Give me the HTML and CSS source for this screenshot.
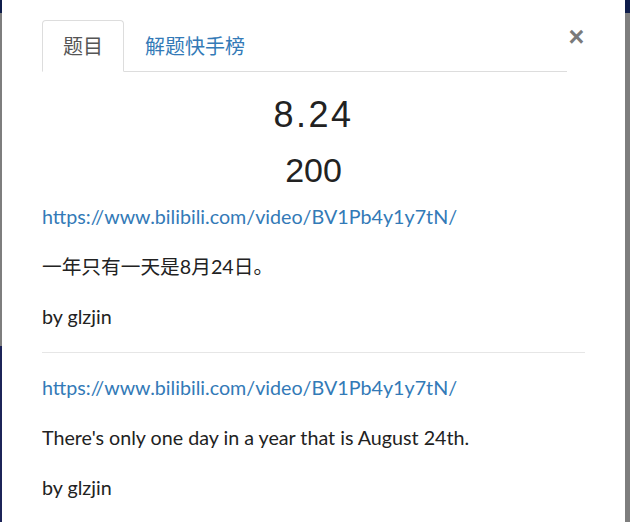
FILE: index.html
```html
<!DOCTYPE html>
<html lang="zh">
<head>
<meta charset="utf-8">
<title>题目</title>
<link rel="stylesheet" href="styles.css">
</head>
<body>
<div class="modal">
  <div class="modal-header">
    <ul class="nav-tabs">
      <li class="tab active">题目</li>
      <li class="tab"><a href="#">解题快手榜</a></li>
    </ul>
    <button class="close" type="button">&times;</button>
  </div>
  <div class="modal-body">
    <h3 class="chal-name">8.24</h3>
    <h4 class="chal-value">200</h4>
    <div class="desc">
      <p><a href="#">https://www.bilibili.com/video/BV1Pb4y1y7tN/</a></p>
      <p>一年只有一天是8月24日。</p>
      <p>by glzjin</p>
      <hr>
      <p><a href="#">https://www.bilibili.com/video/BV1Pb4y1y7tN/</a></p>
      <p>There's only one day in a year that is August 24th.</p>
      <p>by glzjin</p>
    </div>
  </div>
</div>
</body>
</html>
```
FILE: styles.css
```css
html, body {
  margin: 0;
  padding: 0;
  height: 100%;
  overflow: hidden;
}
body {
  background:
    linear-gradient(to bottom, #0f1d4b 0, #0f1d4b 13px, transparent 13px),
    linear-gradient(to bottom, transparent 346px, #1c2458 346px) left top / 2px 100% no-repeat,
    #7e7e7e;
  font-family: Lato, "Noto Sans CJK SC", sans-serif;
  color: #222;
}
.modal {
  box-sizing: border-box;
  margin-left: 2px;
  width: 623px;
  height: 522px;
  background: #fff;
  padding: 20px 40px 0 40px;
}
.modal-header {
  display: flex;
  align-items: flex-start;
}
.nav-tabs {
  flex: 1;
  display: flex;
  list-style: none;
  margin: 0;
  padding: 0;
  border-bottom: 1px solid #ddd;
}
.tab {
  font-family: "Noto Sans CJK SC", sans-serif;
  font-size: 20px;
  line-height: 30px;
  padding: 10px 20px;
  margin-bottom: -1px;
  border: 1px solid transparent;
  border-radius: 4px 4px 0 0;
}
.tab.active {
  color: #555;
  background: #fff;
  border-color: #ddd #ddd transparent;
}
.tab a {
  color: #337ab7;
  text-decoration: none;
}
.close {
  margin: 7px 0 0 1px;
  padding: 0;
  width: 17px;
  background: none;
  border: 0;
  font-family: "Liberation Sans", sans-serif;
  font-size: 27px;
  font-weight: bold;
  line-height: 20px;
  color: #7a7a7a;
}
.modal-body {
  padding: 0;
}
.chal-name {
  margin: 23px 0 0;
  text-align: center;
  font-family: "Liberation Sans", sans-serif;
  font-weight: normal;
  font-size: 36px;
  line-height: 40px;
  letter-spacing: 2.5px;
  color: #222;
}
.chal-value {
  margin: 17px 0 0;
  text-align: center;
  font-family: "Liberation Sans", sans-serif;
  font-weight: normal;
  font-size: 34px;
  line-height: 37px;
  color: #222;
}
.desc {
  margin-top: 14px;
  font-size: 19.7px;
  line-height: 28px;
}
.desc p {
  margin: 0 0 22px;
}
.desc a {
  color: #337ab7;
  text-decoration: none;
}
.desc hr {
  border: 0;
  border-top: 1px solid #e6e6e6;
  margin: -1px 0 21px;
}
```
